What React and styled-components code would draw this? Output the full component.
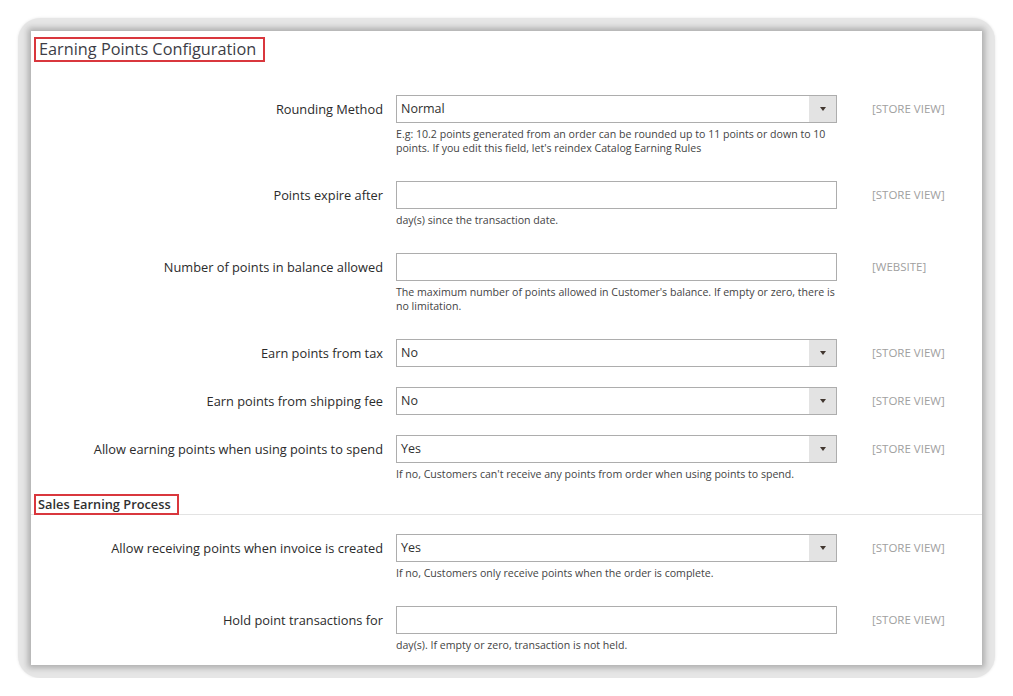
import React from "react";
import styled, { createGlobalStyle } from "styled-components";

const GlobalStyle = createGlobalStyle`
  html, body {
    margin: 0;
    padding: 0;
    background: #ffffff;
  }
  body {
    font-family: "Open Sans", "Liberation Sans", sans-serif;
    color: #303030;
  }
`;

const Frame = styled.div`
  box-sizing: border-box;
  width: 977px;
  height: 660px;
  margin: 18px 0 0 18px;
  padding: 13px;
  border-radius: 22px;
  background: #e6e6e6;
  box-shadow: 0 0 3px rgba(0, 0, 0, 0.1);
`;

const Card = styled.div`
  box-sizing: border-box;
  height: 100%;
  padding-top: 6px;
  background: #ffffff;
  overflow: hidden;
  box-shadow: 0 0 6px 3px rgba(0, 0, 0, 0.25);
`;

const Title = styled.h2`
  display: inline-block;
  box-sizing: border-box;
  height: 25px;
  margin: 0 0 0 3px;
  padding: 0 7px 0 3px;
  border: 2px solid #d9373d;
  font-size: 16.3px;
  font-weight: 400;
  line-height: 21px;
  color: #3d3d46;
`;

const Section = styled.div`
  margin-top: ${(p) => p.$top}px;
`;

const Row = styled.div`
  display: grid;
  grid-template-columns: 352px 441px 1fr;
  column-gap: 13px;
  padding-bottom: 20px;

  &:last-child {
    padding-bottom: 7px;
  }
`;

const Label = styled.label`
  text-align: right;
  font-size: 12.8px;
  font-weight: 400;
  line-height: 28px;
  color: #2b2b2b;
  white-space: nowrap;
`;

const Control = styled.div`
  display: flex;
  flex-direction: column;
`;

const TextInput = styled.input`
  box-sizing: border-box;
  width: 100%;
  height: 28px;
  margin: 0;
  border: 1px solid #adadad;
  background: #ffffff;
  outline: none;
`;

const Select = styled.div`
  box-sizing: border-box;
  display: flex;
  height: 28px;
  border: 1px solid #adadad;
  background: #ffffff;
`;

const SelectValue = styled.span`
  flex: 1;
  padding-left: 4px;
  font-size: 12.5px;
  line-height: 26px;
  color: #303030;
`;

const Arrow = styled.span`
  display: flex;
  align-items: center;
  justify-content: center;
  width: 27px;
  background: #e3e3e3;

  &::after {
    content: "";
    border-left: 3.5px solid transparent;
    border-right: 3.5px solid transparent;
    border-top: 4px solid #41362f;
  }
`;

const Note = styled.div`
  margin: 4px 0 6px;
  font-size: 10.6px;
  line-height: 14px;
  color: #444;
  white-space: nowrap;
`;

const Scope = styled.span`
  padding-left: 22px;
  font-size: 11.5px;
  line-height: 28px;
  color: #a0a0a0;
  text-transform: uppercase;
`;

const HeadingBar = styled.div`
  display: flex;
  height: 20px;
  border-bottom: 1px solid #e3e3e3;
`;

const SubTitle = styled.h3`
  box-sizing: border-box;
  height: 21px;
  margin: 0 0 0 3px;
  padding: 0 6px 0 2px;
  border: 2px solid #d9373d;
  font-size: 12.8px;
  font-weight: 600;
  line-height: 17px;
  color: #303030;
  background: #ffffff;
`;

const Field = ({ label, value, note, scope }) => (
  <Row>
    <Label>{label}</Label>
    <Control>
      {value !== undefined ? (
        <Select>
          <SelectValue>{value}</SelectValue>
          <Arrow />
        </Select>
      ) : (
        <TextInput type="text" readOnly />
      )}
      {note && <Note>{note}</Note>}
    </Control>
    <Scope>{scope}</Scope>
  </Row>
);

export default function App() {
  return (
    <>
      <GlobalStyle />
      <Frame>
        <Card>
          <Title>Earning Points Configuration</Title>
          <Section $top={33}>
            <Field
              label="Rounding Method"
              value="Normal"
              scope="[Store View]"
              note={
                <>
                  E.g: 10.2 points generated from an order can be rounded up to 11 points or down to 10
                  <br />
                  points. If you edit this field, let's reindex Catalog Earning Rules
                </>
              }
            />
            <Field
              label="Points expire after"
              scope="[Store View]"
              note="day(s) since the transaction date."
            />
            <Field
              label="Number of points in balance allowed"
              scope="[Website]"
              note={
                <>
                  The maximum number of points allowed in Customer's balance. If empty or zero, there is
                  <br />
                  no limitation.
                </>
              }
            />
            <Field label="Earn points from tax" value="No" scope="[Store View]" />
            <Field label="Earn points from shipping fee" value="No" scope="[Store View]" />
            <Field
              label="Allow earning points when using points to spend"
              value="Yes"
              scope="[Store View]"
              note="If no, Customers can't receive any points from order when using points to spend."
            />
          </Section>
          <HeadingBar>
            <SubTitle>Sales Earning Process</SubTitle>
          </HeadingBar>
          <Section $top={19}>
            <Field
              label="Allow receiving points when invoice is created"
              value="Yes"
              scope="[Store View]"
              note="If no, Customers only receive points when the order is complete."
            />
            <Field
              label="Hold point transactions for"
              scope="[Store View]"
              note="day(s). If empty or zero, transaction is not held."
            />
          </Section>
        </Card>
      </Frame>
    </>
  );
}
